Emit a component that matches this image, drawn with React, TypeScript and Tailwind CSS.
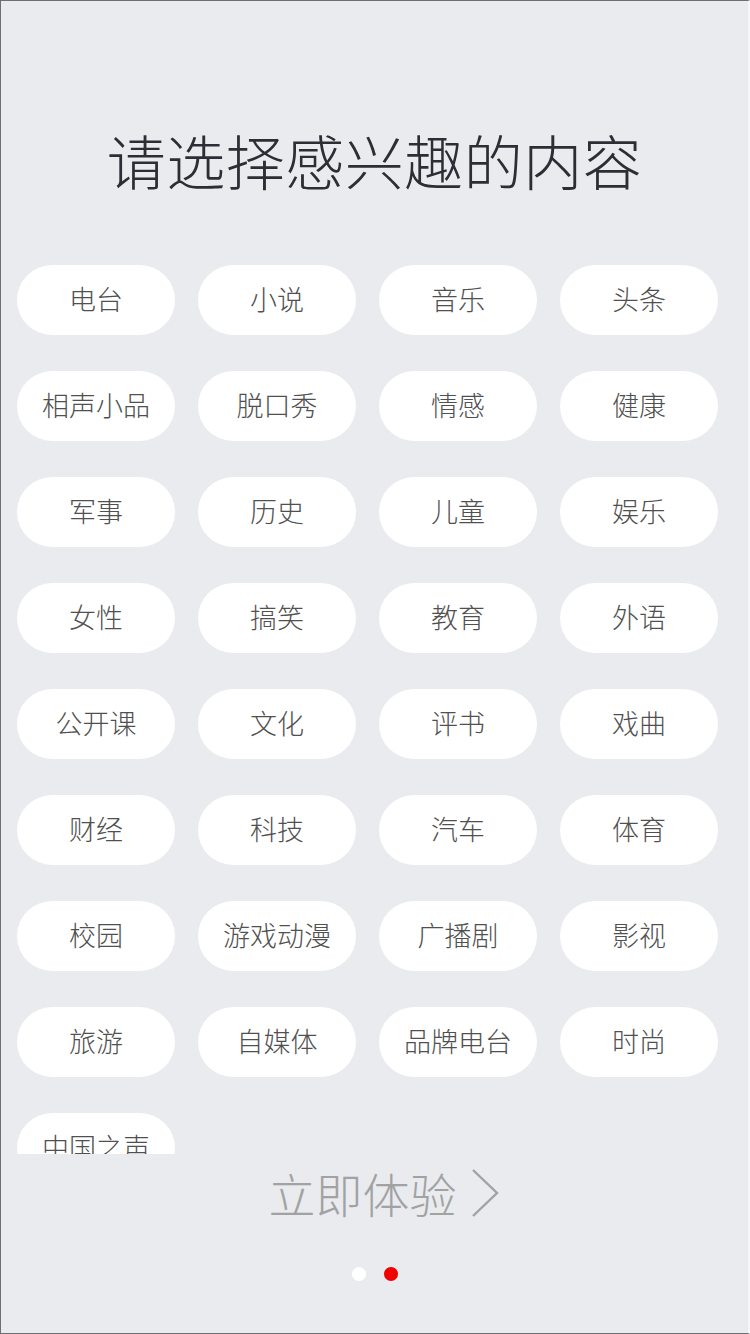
import React from "react";

const tags = [
  "电台", "小说", "音乐", "头条",
  "相声小品", "脱口秀", "情感", "健康",
  "军事", "历史", "儿童", "娱乐",
  "女性", "搞笑", "教育", "外语",
  "公开课", "文化", "评书", "戏曲",
  "财经", "科技", "汽车", "体育",
  "校园", "游戏动漫", "广播剧", "影视",
  "旅游", "自媒体", "品牌电台", "时尚",
  "中国之声",
];

export default function App() {
  return (
    <div
      className="w-[750px] h-[1334px] bg-[#e9ebef] border-t border-l border-b border-[#6f6f6f] border-r-2 border-r-[#f4f5f7] flex flex-col overflow-hidden"
      style={{ fontFamily: '"Noto Sans CJK SC", "Noto Sans", sans-serif' }}
    >
      {/* 标题 */}
      <h1 className="mt-[129px] text-center text-[59px] leading-[59px] font-light text-[#2b2e34] tracking-[0.5px]">
        请选择感兴趣的内容
      </h1>

      {/* 标签列表 */}
      <div className="mt-[76px] h-[889px] overflow-hidden px-[16px]">
        <div className="grid grid-cols-[repeat(4,158px)] gap-x-[23px] gap-y-[36px]">
          {tags.map((t) => (
            <button
              key={t}
              className="h-[70px] pb-[3px] rounded-full bg-white text-[27px] leading-none font-light text-[#505050] flex items-center justify-center"
            >
              {t}
            </button>
          ))}
        </div>
      </div>

      {/* 立即体验 */}
      <div className="mt-[14px] h-[50px] flex items-center justify-center gap-[14px] pl-[18px] text-[#a2a2a2]">
        <span className="text-[47px] leading-[50px] font-light">立即体验</span>
        <svg width="28" height="48" viewBox="0 0 28 48" fill="none">
          <path d="M2 1 L26 24 L2 47" stroke="#a2a2a2" strokeWidth="2.4" />
        </svg>
      </div>

      {/* 分页点 */}
      <div className="mt-[49px] flex justify-center gap-[18px] pl-[1px]">
        <span className="w-[14px] h-[14px] rounded-full bg-white" />
        <span className="w-[14px] h-[14px] rounded-full bg-[#f20000]" />
      </div>
    </div>
  );
}
